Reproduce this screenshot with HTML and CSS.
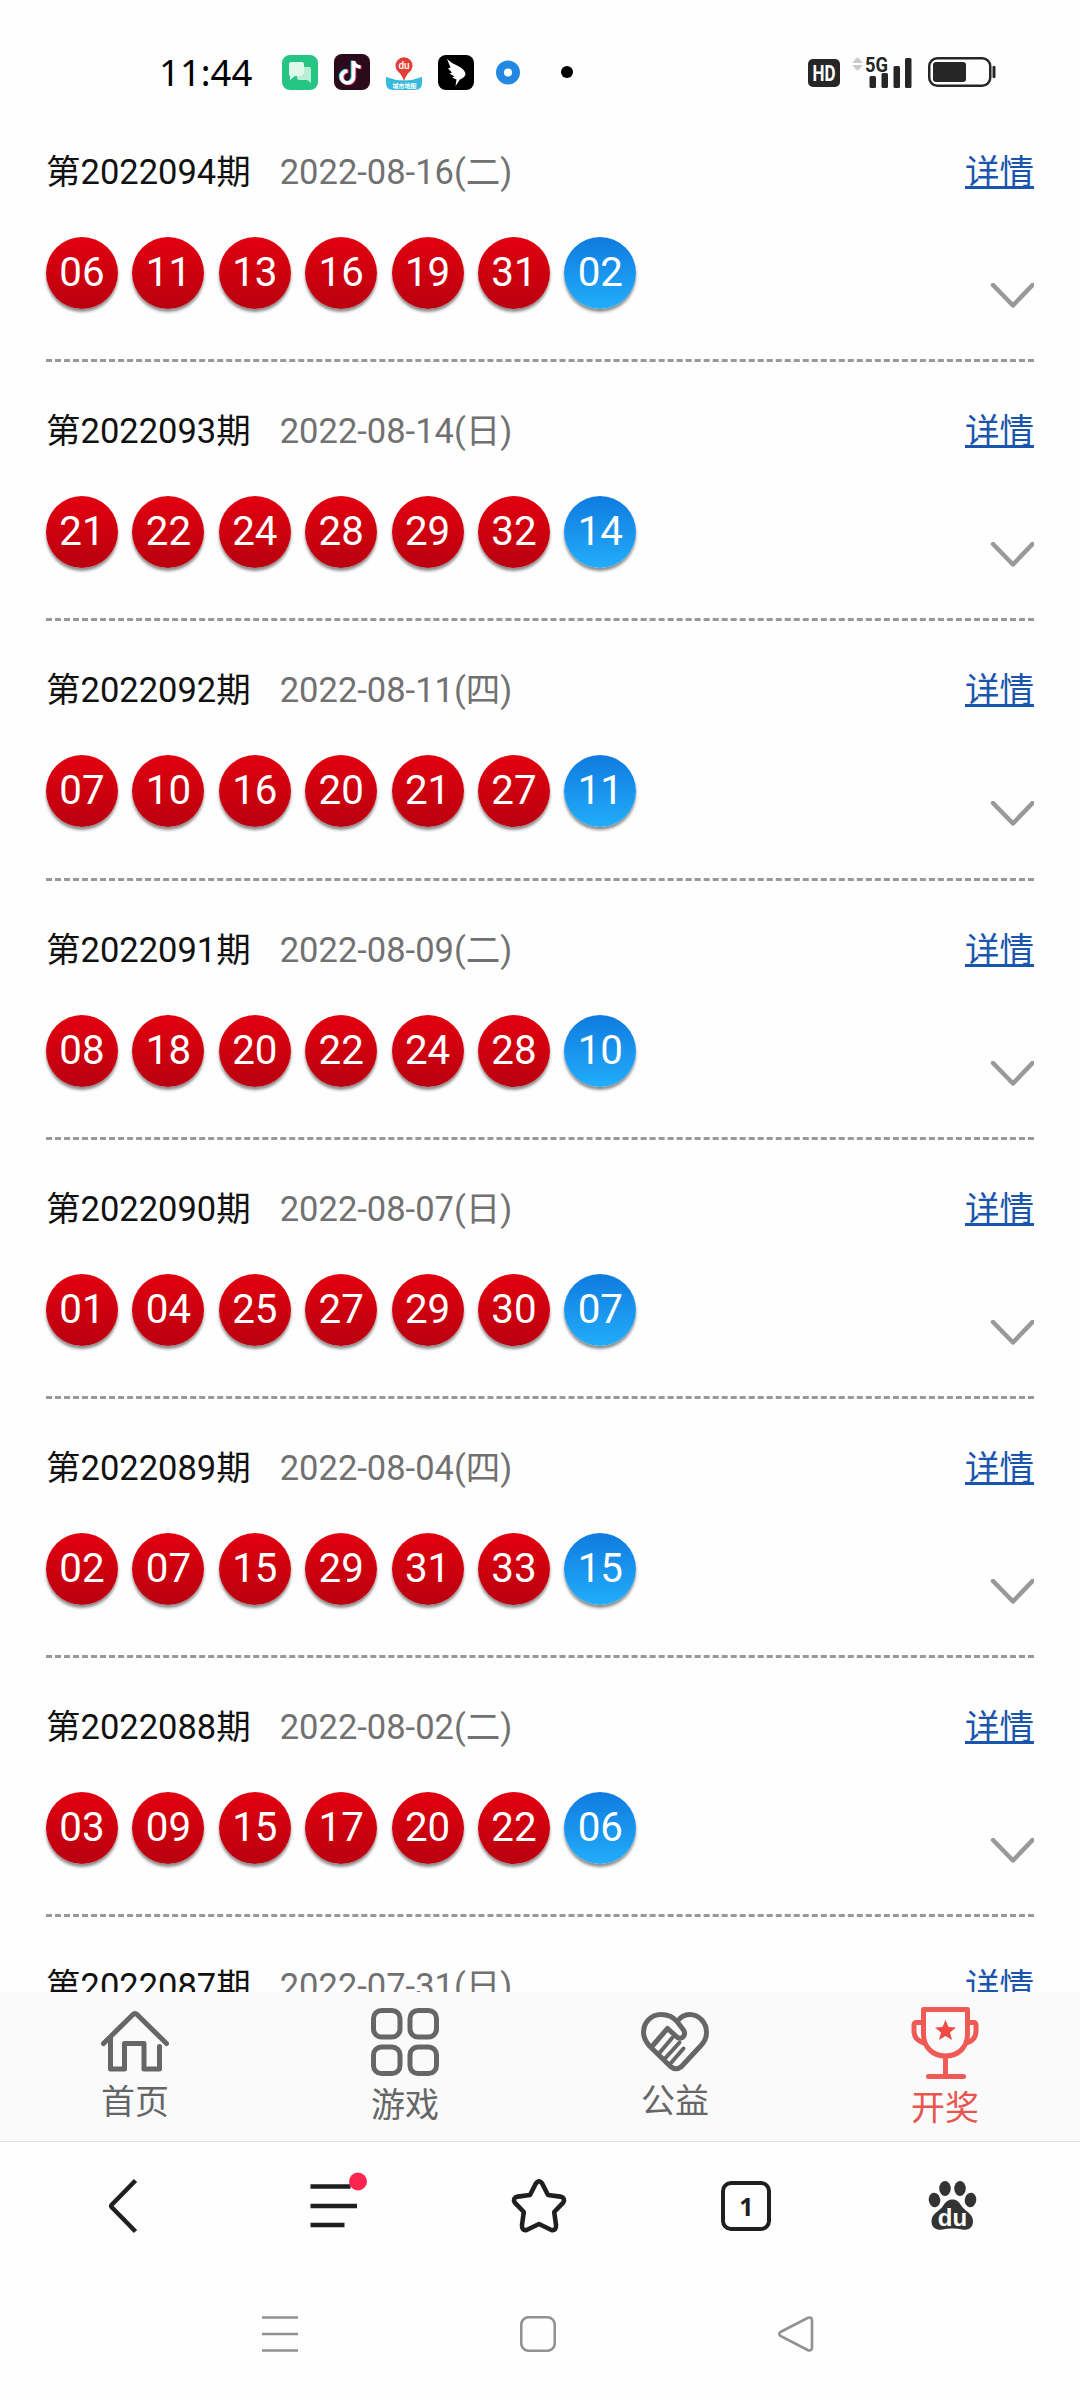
FILE: index.html
```
<!DOCTYPE html>
<html lang="zh-CN">
<head>
    <meta charset="UTF-8">
    <meta name="viewport" content="width=device-width, initial-scale=1.0">
    <title>开奖</title>
    <link rel="stylesheet" href="styles.css">
</head>
<body>

    <header class="status-bar">
        <div class="status-left">
            <span class="clock">11:44</span>
            <svg class="app-icon" width="36" height="36" viewBox="0 0 36 36">
                <rect y="1" width="36" height="35" rx="8" fill="#27c584"/>
                <path d="M9 8h11q2 0 2 2v10q0 2-2 2h-7l-5 4v-4q-1 0-1-2V10q0-2 2-2z" fill="#dff8ec"/>
                <path d="M19 13h8q2 0 2 2v14l-4-3h-8q-2 0-2-2v-2h5q2 0 2-2v-7z" fill="#b9edd6"/>
            </svg>
            <svg class="app-icon" width="36" height="36" viewBox="0 0 36 36">
                <rect width="36" height="36" rx="8" fill="#2b0a1c"/>
                <g fill="none" stroke-width="3.6">
                    <path d="M18.500 6.500v16a6 6 0 1 1-6-6M18.500 7q1 5 7 5.500" stroke="#3fd8dc"/>
                    <path d="M20.500 7.500v16a6 6 0 1 1-6-6M20.500 8q1 5 7 5.500" stroke="#ef3d62"/>
                    <path d="M19.500 7v16a6 6 0 1 1-6-6M19.500 7.500q1 5 7 5.500" stroke="#fff"/>
                </g>
            </svg>
            <svg class="app-icon" width="36" height="36" viewBox="0 0 36 36">
                <path d="M0 23q18 7 36 0v6q0 7-7 7H7q-7 0-7-7z" fill="#35b9dc"/>
                <path d="M18 27q-2-6-5-8.500a8.500 8.500 0 1 1 10 0Q20 21 18 27z" fill="#e23e38"/>
                <text x="18" y="14.500" text-anchor="middle" class="map-du">du</text>
                <text x="18.500" y="34" text-anchor="middle" class="map-name">城市地图</text>
            </svg>
            <svg class="app-icon" width="36" height="36" viewBox="0 0 36 36">
                <rect y="1" width="36" height="35" rx="8" fill="#000"/>
                <path d="M9 5q4 4 11 7 7 3 7.500 8.500-1 3-5.500 5l-4.500 6.500 1-6.500-4.500-2 2.500-1-5-3 2.500-1-4-4 2.500-1z" fill="#fff"/>
            </svg>
            <svg class="app-icon" width="36" height="36" viewBox="0 0 36 36">
                <circle cx="18" cy="18.500" r="8" fill="none" stroke="#2288e2" stroke-width="8"/>
            </svg>
            <span class="more-dot"></span>
        </div>
        <div class="status-right">
            <svg width="32" height="28" viewBox="0 0 32 28" class="hd">
                <rect width="32" height="28" rx="5" fill="#262626"/>
                <text x="4.500" y="21.500" textLength="23" lengthAdjust="spacingAndGlyphs">HD</text>
            </svg>
            <svg class="signal" width="64" height="34" viewBox="0 0 64 34">
                <path d="M4 8l5.500-6 5.500 6zM4 10l5.500 6 5.500-6z" fill="#ccc"/>
                <text x="17" y="17" class="net" textLength="23" lengthAdjust="spacingAndGlyphs">5G</text>
                <g fill="#262626">
                    <rect x="21.500" y="21" width="6.500" height="12" rx="1.500"/>
                    <rect x="33.500" y="18" width="6.500" height="15" rx="1.500"/>
                    <rect x="45.500" y="11" width="6.500" height="22" rx="1.500"/>
                    <rect x="57" y="3" width="6.500" height="30" rx="1.500"/>
                </g>
            </svg>
            <svg class="battery" width="68" height="30" viewBox="0 0 68 30">
                <rect x="1.250" y="1.250" width="61" height="27.500" rx="8" fill="none" stroke="#262626" stroke-width="2.500"/>
                <rect x="5" y="5" width="33" height="20" rx="3" fill="#262626"/>
                <rect x="64.500" y="9" width="3" height="12" rx="1" fill="#262626"/>
            </svg>
        </div>
    </header>

    <main class="draw-list">
        <section class="draw">
            <div class="draw-head"><span class="issue">第2022094期</span><span class="date">2022-08-16(二)</span><a class="detail" href="#">详情</a></div>
            <div class="balls">
                <span class="ball">06</span><span class="ball">11</span><span class="ball">13</span><span class="ball">16</span><span class="ball">19</span><span class="ball">31</span><span class="ball blue">02</span>
                <svg class="arrow" width="44" height="26" viewBox="0 0 44 26"><path d="M3 2l20 20.500L42.500 2"/></svg>
            </div>
        </section>
        <section class="draw">
            <div class="draw-head"><span class="issue">第2022093期</span><span class="date">2022-08-14(日)</span><a class="detail" href="#">详情</a></div>
            <div class="balls">
                <span class="ball">21</span><span class="ball">22</span><span class="ball">24</span><span class="ball">28</span><span class="ball">29</span><span class="ball">32</span><span class="ball blue">14</span>
                <svg class="arrow" width="44" height="26" viewBox="0 0 44 26"><path d="M3 2l20 20.500L42.500 2"/></svg>
            </div>
        </section>
        <section class="draw">
            <div class="draw-head"><span class="issue">第2022092期</span><span class="date">2022-08-11(四)</span><a class="detail" href="#">详情</a></div>
            <div class="balls">
                <span class="ball">07</span><span class="ball">10</span><span class="ball">16</span><span class="ball">20</span><span class="ball">21</span><span class="ball">27</span><span class="ball blue">11</span>
                <svg class="arrow" width="44" height="26" viewBox="0 0 44 26"><path d="M3 2l20 20.500L42.500 2"/></svg>
            </div>
        </section>
        <section class="draw">
            <div class="draw-head"><span class="issue">第2022091期</span><span class="date">2022-08-09(二)</span><a class="detail" href="#">详情</a></div>
            <div class="balls">
                <span class="ball">08</span><span class="ball">18</span><span class="ball">20</span><span class="ball">22</span><span class="ball">24</span><span class="ball">28</span><span class="ball blue">10</span>
                <svg class="arrow" width="44" height="26" viewBox="0 0 44 26"><path d="M3 2l20 20.500L42.500 2"/></svg>
            </div>
        </section>
        <section class="draw">
            <div class="draw-head"><span class="issue">第2022090期</span><span class="date">2022-08-07(日)</span><a class="detail" href="#">详情</a></div>
            <div class="balls">
                <span class="ball">01</span><span class="ball">04</span><span class="ball">25</span><span class="ball">27</span><span class="ball">29</span><span class="ball">30</span><span class="ball blue">07</span>
                <svg class="arrow" width="44" height="26" viewBox="0 0 44 26"><path d="M3 2l20 20.500L42.500 2"/></svg>
            </div>
        </section>
        <section class="draw">
            <div class="draw-head"><span class="issue">第2022089期</span><span class="date">2022-08-04(四)</span><a class="detail" href="#">详情</a></div>
            <div class="balls">
                <span class="ball">02</span><span class="ball">07</span><span class="ball">15</span><span class="ball">29</span><span class="ball">31</span><span class="ball">33</span><span class="ball blue">15</span>
                <svg class="arrow" width="44" height="26" viewBox="0 0 44 26"><path d="M3 2l20 20.500L42.500 2"/></svg>
            </div>
        </section>
        <section class="draw">
            <div class="draw-head"><span class="issue">第2022088期</span><span class="date">2022-08-02(二)</span><a class="detail" href="#">详情</a></div>
            <div class="balls">
                <span class="ball">03</span><span class="ball">09</span><span class="ball">15</span><span class="ball">17</span><span class="ball">20</span><span class="ball">22</span><span class="ball blue">06</span>
                <svg class="arrow" width="44" height="26" viewBox="0 0 44 26"><path d="M3 2l20 20.500L42.500 2"/></svg>
            </div>
        </section>
        <section class="draw">
            <div class="draw-head"><span class="issue">第2022087期</span><span class="date">2022-07-31(日)</span><a class="detail" href="#">详情</a></div>
        </section>
    </main>

    <nav class="tabs">
        <div class="tab home">
            <svg width="68" height="62" viewBox="0 0 68 62">
                <path d="M2.500 33.500L32 4.500q2-2 4 0l29.500 29M9.500 28v31h14V33.500h19.500V59h15.500V36.500"/>
            </svg>
            <span>首页</span>
        </div>
        <div class="tab games">
            <svg width="68" height="68" viewBox="0 0 68 68">
                <rect x="2.500" y="2.500" width="26.500" height="26.500" rx="8"/>
                <rect x="39" y="2.500" width="26.500" height="26.500" rx="8"/>
                <rect x="2.500" y="39" width="26.500" height="26.500" rx="8"/>
                <rect x="39" y="39" width="26.500" height="26.500" rx="8"/>
            </svg>
            <span>游戏</span>
        </div>
        <div class="tab charity">
            <svg width="68" height="60" viewBox="0 0 68 60">
                <path d="M36 9.500C32 4.500 26 2.500 20 2.500c-10 0-17.500 8-17.500 18 0 6 3 10 6 13.500l21 20.500q5.500 4.500 11 0L59.500 34q6-6 6-13.500c0-10-7.500-18-17-18-5 0-9 2.500-12.500 7l6.500 8.500c3 5-1.500 10-6 7.500L26.500 16.500 11 34.500"/>
                <path d="M31.500 25.500L18 41.500M38.500 30.500L24 46.500M42.500 36.500L29.500 51.500" stroke-width="4"/>
            </svg>
            <span>公益</span>
        </div>
        <div class="tab prize active">
            <svg width="68" height="72" viewBox="0 0 68 72">
                <path d="M12.500 2.500h44V27c0 13-9 22-22 22s-22-9-22-22zM12.500 15.500h-7q-2.500 0-2.500 3V24q0 9 10 12M56.500 15.500h6q2.500 0 2.500 3V24q0 9-9 12M34.500 49v20M17.500 69.500h35"/>
                <path class="fill" d="M34.500 13l3 7 7.500.5-6 5 2 7.500-6.500-4-6.500 4 2-7.500-6-5 7.500-.5z"/>
            </svg>
            <span>开奖</span>
        </div>
    </nav>

    <div class="browser-bar">
        <div class="tool">
            <svg width="60" height="60" viewBox="0 0 60 60"><path d="M38.500 4.500L15 28.500q-1.500 1.500 0 3l23.500 24" stroke-width="4.500"/></svg>
        </div>
        <div class="tool">
            <svg width="60" height="60" viewBox="0 0 60 60"><path d="M6.500 10.500h40M6.500 30h46.500M6.500 49h34" stroke-width="4.500"/><circle cx="54" cy="5.500" r="9" fill="#fd254f" stroke="none"/></svg>
        </div>
        <div class="tool">
            <svg width="60" height="60" viewBox="0 0 60 60"><path d="M25.700 7.800q3.300-5.200 6.600 0l5.700 11.200 12.200 1.600q5.600 1.400 3 6L44.200 36l1.800 13q.4 6-4.600 5L29 48l-12.400 6q-5 1-4.600-5l1.800-13-9-9.400q-2.600-4.600 3-6L20 19z" stroke-width="4.600" stroke-linejoin="round"/></svg>
        </div>
        <div class="tool">
            <span class="page-count">1</span>
        </div>
        <div class="tool">
            <svg width="60" height="60" viewBox="0 0 60 60">
                <g fill="#333" stroke="none">
                    <ellipse cx="11.500" cy="24" rx="5.800" ry="7.300" transform="rotate(-8 11.500 24)"/>
                    <ellipse cx="22" cy="12.500" rx="5.800" ry="7.500"/>
                    <ellipse cx="37" cy="12.500" rx="5.800" ry="7.500"/>
                    <ellipse cx="47.500" cy="24" rx="5.800" ry="7.300" transform="rotate(8 47.500 24)"/>
                    <path d="M29.500 23.500c4.500 0 6.500 2.500 9 6.500 3 4.500 11.500 8 11.500 15 0 8-6 9.500-11 8.500-7-1.200-12-1.200-19 0C15 54.500 8.500 53 8.500 45c0-7 8.500-10.500 11.500-15 2.500-4 5-6.500 9.500-6.500z"/>
                </g>
                <text x="29.500" y="49.500" text-anchor="middle" class="paw-du">du</text>
            </svg>
        </div>
    </div>

    <div class="system-nav">
        <svg width="36" height="36" viewBox="0 0 36 36"><path d="M0 1.500h36M0 18h36M0 34.500h36"/></svg>
        <svg width="36" height="36" viewBox="0 0 36 36"><rect x="1.250" y="1.250" width="33.500" height="33.500" rx="7.500"/></svg>
        <svg width="36" height="36" viewBox="0 0 36 36"><path d="M2.500 16L29.500 2q4-1.500 4.500 2v28q-.5 3.500-4.500 2L2.500 20q-2.500-2 0-4z"/></svg>
    </div>

</body>
</html>
```

FILE: styles.css
```
body {
    margin: 0;
    width: 1080px;
    height: 2400px;
    display: flex;
    flex-direction: column;
    overflow: hidden;
    background-color: #fefefe;
    font-family: Roboto, "Noto Sans CJK SC", sans-serif;
}

svg {
    display: block;
}

/* phone status bar */
.status-bar {
    height: 103px;
    flex: none;
    box-sizing: border-box;
    padding: 41px 84px 0 159px;
    display: flex;
    justify-content: space-between;
    align-items: flex-start;
}

.status-left {
    display: flex;
    align-items: center;
    height: 62px;
}

.clock {
    width: 123px;
    font-family: "Noto Sans", sans-serif;
    font-size: 36.5px;
    line-height: 64px;
    color: #000;
}

.app-icon {
    margin-right: 16px;
}

.more-dot {
    width: 12px;
    height: 12px;
    margin-left: 19px;
    border-radius: 50%;
    background-color: #000;
}

.map-du {
    font: 500 10px Roboto, sans-serif;
    fill: #fff;
}

.map-name {
    font: 700 6px "Noto Sans CJK SC", sans-serif;
    fill: #fff;
}

.status-right {
    display: flex;
    align-items: center;
    height: 62px;
}

.hd {
    margin-top: 2px;
    font: 700 22px Roboto, sans-serif;
    fill: #fff;
}

.signal {
    overflow: visible;
    margin-left: 8px;
}

.net {
    font: 700 21px Roboto, sans-serif;
    fill: #262626;
}

.battery {
    margin-left: 16px;
}

/* draw results */
.draw-list {
    height: 1889px;
    flex: none;
    overflow: hidden;
    padding: 0 46px;
}

.draw {
    height: 259.2px;
    box-sizing: border-box;
    padding-top: 44px;
    border-bottom: 3px dashed #999;
}

.draw-head {
    display: flex;
    height: 50px;
    line-height: 50px;
    font-size: 34.5px;
}

.issue {
    color: #111;
}

.date {
    margin-left: 29px;
    color: #717171;
}

.detail {
    margin-left: auto;
    color: #1a55ad;
    text-decoration: underline;
    text-decoration-thickness: 3px;
    text-underline-offset: 2px;
}

.balls {
    display: flex;
    gap: 14.4px;
    margin-top: 40px;
}

.ball {
    width: 72px;
    height: 72px;
    border-radius: 50%;
    background: linear-gradient(#e2000f, #b9000f);
    box-shadow: 0 3px 3px rgba(0, 0, 0, 0.45);
    color: #fff;
    font-size: 40.3px;
    line-height: 71px;
    text-align: center;
}

.blue {
    background: linear-gradient(#0f7bdf, #22adfb);
}

.arrow {
    margin: 46px 0 0 auto;
    fill: none;
    stroke: #999;
    stroke-width: 4.5;
    stroke-linecap: round;
    stroke-linejoin: round;
}

/* site tabs */
.tabs {
    height: 150px;
    flex: none;
    display: flex;
    background-color: #fafafa;
    border-bottom: 1px solid #e3e3e3;
    box-sizing: border-box;
}

.tab {
    flex: 1;
    display: flex;
    flex-direction: column;
    align-items: center;
    color: #666;
    font-size: 34px;
    line-height: 46px;
}

.tab svg {
    fill: none;
    stroke: #666;
    stroke-width: 5;
    stroke-linecap: round;
    stroke-linejoin: round;
}

.home {
    padding-top: 18px;
}

.home span {
    margin-top: 7px;
}

.games {
    padding-top: 16px;
}

.games span {
    margin-top: 6px;
}

.charity {
    padding-top: 20px;
}

.charity span {
    margin-top: 6px;
}

.prize {
    padding-top: 15px;
}

.prize span {
    margin-top: 6px;
}

.active {
    color: #e8544f;
}

.active svg {
    stroke: #f05a55;
}

.active .fill {
    fill: #f04a46;
    stroke: none;
}

/* browser toolbar */
.browser-bar {
    height: 126px;
    flex: none;
    display: flex;
    align-items: center;
    box-sizing: border-box;
    padding: 1px 24px 0;
}

.tool {
    flex: 1;
    display: flex;
    justify-content: center;
}

.tool svg {
    overflow: visible;
    fill: none;
    stroke: #1f1f1f;
}

.page-count {
    width: 42px;
    height: 42px;
    border: 4.5px solid #1f1f1f;
    border-radius: 10px;
    color: #1f1f1f;
    font-family: "Noto Sans", sans-serif;
    font-size: 25px;
    font-weight: 700;
    line-height: 42px;
    text-align: center;
}

.paw-du {
    font: 700 24px "Liberation Sans", sans-serif;
    fill: #fff;
    stroke: none;
}

/* system navigation */
.system-nav {
    flex: 1;
    display: flex;
    justify-content: center;
    gap: 222px;
    padding: 48px 4px 0 0;
}

.system-nav svg {
    fill: none;
    stroke: #929292;
    stroke-width: 2.6;
}
```
